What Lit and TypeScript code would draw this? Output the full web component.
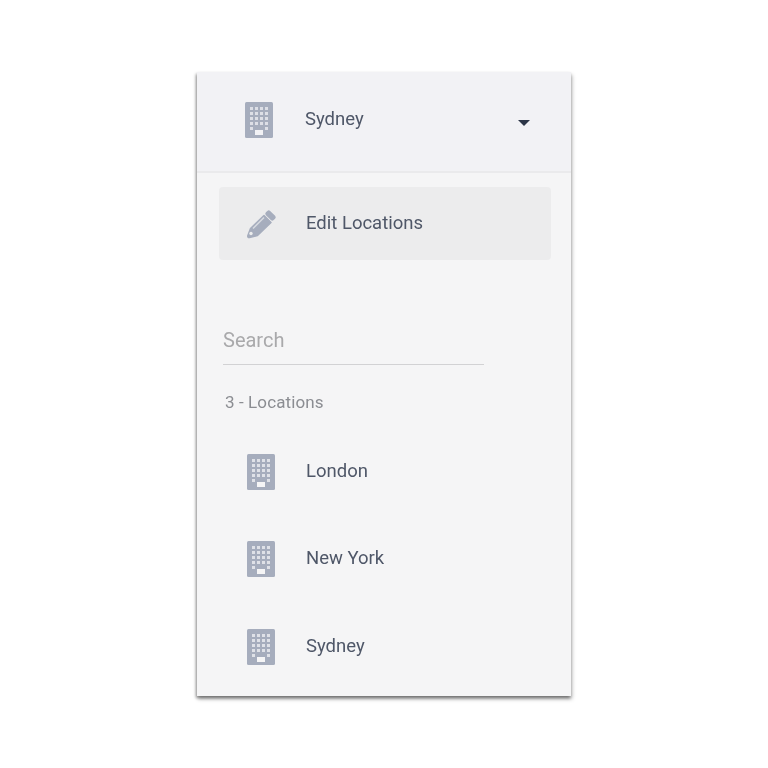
import { LitElement, html, css, svg } from "lit";
import { customElement } from "lit/decorators.js";

const windows: [number, number][] = [];
for (let r = 0; r < 5; r++) {
  for (let c = 0; c < 4; c++) {
    if (r === 4 && (c === 1 || c === 2)) continue;
    windows.push([5 + c * 5, 5 + r * 5]);
  }
}

const building = (hole: string) => html`<svg class="building" width="28" height="36" viewBox="0 0 28 36">
  <rect width="28" height="36" rx="1.5" fill="#a6adbd"></rect>
  ${windows.map(([x, y]) => svg`<rect x=${x} y=${y} width="3" height="3" fill=${hole} opacity="0.72"></rect>`)}
  <rect x="10" y="28" width="8" height="5" fill=${hole}></rect>
</svg>`;

@customElement("app-root")
export class AppRoot extends LitElement {
  static styles = css`
    :host {
      display: block;
      width: 768px;
      height: 768px;
      background: #fff;
      font-family: Roboto, "Liberation Sans", sans-serif;
      padding: 72px 0 0 197px;
      box-sizing: border-box;
    }
    .panel {
      width: 374px;
      height: 624px;
      background: #f5f5f6;
      box-shadow: -1px 2px 3px rgba(0, 0, 0, 0.4), 1px 3px 4px rgba(0, 0, 0, 0.3);
      display: flex;
      flex-direction: column;
      filter: blur(0.7px);
    }
    .header {
      height: 101px;
      flex: none;
      box-sizing: border-box;
      background: #f2f2f5;
      border-bottom: 2px solid #eaeaec;
      display: flex;
      align-items: center;
      padding: 0 41px 3px 48px;
    }
    .header .name {
      margin-left: 32px;
      flex: 1;
      font-size: 18.5px;
      color: #4f5768;
      margin-bottom: 2px;
    }
    .caret {
      width: 0;
      height: 0;
      border-left: 6px solid transparent;
      border-right: 6px solid transparent;
      border-top: 6px solid #2c3547;
      margin-top: 6px;
    }
    .edit {
      margin: 14px 20px 0 22px;
      height: 73px;
      flex: none;
      background: #ececed;
      border-radius: 4px;
      display: flex;
      align-items: center;
      padding-left: 27px;
    }
    .edit span {
      margin-left: 29px;
      margin-bottom: 2px;
      font-size: 18.5px;
      color: #4f5768;
    }
    .search {
      margin: 64px 0 0 26px;
      width: 261px;
      height: 41px;
      flex: none;
      box-sizing: border-box;
      border-bottom: 1.5px solid #d2d2d4;
      font-size: 20px;
      line-height: 32px;
      color: #a9a9ab;
    }
    .count {
      margin: 26px 0 0 28px;
      font-size: 17px;
      line-height: 22px;
      letter-spacing: 0.1px;
      color: #8b8d92;
    }
    .list {
      margin-top: 15px;
      display: flex;
      flex-direction: column;
    }
    .row {
      height: 87.5px;
      display: flex;
      align-items: center;
      padding-left: 50px;
      font-size: 18.5px;
      color: #4f5768;
    }
    .row span {
      margin-left: 31px;
      margin-bottom: 2px;
    }
    .building {
      flex: none;
    }
  `;

  render() {
    return html`<div class="panel">
      <div class="header">
        ${building("#f2f2f5")}
        <div class="name">Sydney</div>
        <div class="caret"></div>
      </div>
      <div class="edit">
        <svg width="31" height="30" viewBox="0 0 31 30">
          <rect x="-5.500" y="-3" width="11" height="6" rx="2" fill="#a6adbd" transform="translate(24.500 6.500) rotate(45)"></rect>
          <path fill="#a6adbd" stroke="#a6adbd" stroke-width="1.500" stroke-linejoin="round" d="M18 6.500L25 13.500L11.500 26.500L3.500 28.500Q1.500 28.800 1.800 26.800L4.500 19.500Z"></path>
          <path fill="none" stroke="#d9dbe1" stroke-width="1.500" d="M7 19.500L18 8.500"></path>
          <circle cx="5" cy="24.500" r="1.700" fill="#eceded"></circle>
        </svg>
        <span>Edit Locations</span>
      </div>
      <div class="search">Search</div>
      <div class="count">3 - Locations</div>
      <div class="list">
        ${["London", "New York", "Sydney"].map(
          (n) => html`<div class="row">${building("#f5f5f6")}<span>${n}</span></div>`
        )}
      </div>
    </div>`;
  }
}
